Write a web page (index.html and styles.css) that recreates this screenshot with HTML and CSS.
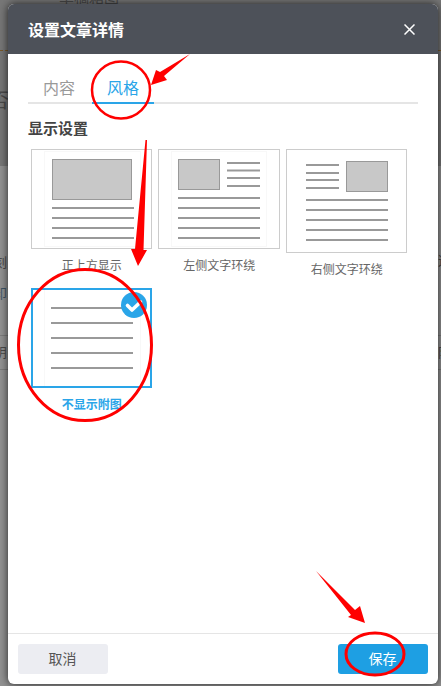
FILE: index.html
```html
<!DOCTYPE html>
<html lang="zh">
<head>
<meta charset="utf-8">
<title>设置文章详情</title>
<link rel="stylesheet" href="styles.css">
</head>
<body>
<div class="backdrop">
  <div class="backdrop-top"></div>
  <span class="ghost ghost-top">草稿箱图</span>
  <span class="ghost ghost-big">否</span>
  <span class="ghost ghost-a">刻</span>
  <span class="ghost ghost-b">印</span>
  <span class="ghost ghost-c">阴</span>
  <span class="ghost ghost-d">这</span>
  <span class="ghost ghost-e">隐</span>
  <i class="ghost-line ghost-line-1"></i>
  <i class="ghost-line ghost-line-2"></i>
  <i class="ghost-dash"></i>
</div>

<main class="modal">
  <header class="modal-head">
    <h1 class="modal-title">设置文章详情</h1>
    <svg class="close" width="11" height="11" viewBox="0 0 11 11" aria-label="关闭"><path d="M.5.5l10 10M10.500.5l-10 10" stroke="#fff" stroke-width="1.5" fill="none"/></svg>
  </header>

  <section class="modal-body">
    <nav class="tabs">
      <span class="tab">内容</span>
      <span class="tab tab-active">风格</span>
    </nav>
    <h2 class="section-title">显示设置</h2>
    <div class="options">
      <div class="option">
        <div class="thumb">
          <svg width="119" height="98" viewBox="0 0 119 98">
            <rect class="faint" x="12.500" y="1.500" width="96" height="95"/>
            <rect class="pic" x="20.500" y="9.500" width="79" height="40"/>
            <path class="ln" d="M20 58h82M20 68h82M20 78h82M20 88h82"/>
          </svg>
        </div>
        <div class="label">正上方显示</div>
      </div>
      <div class="option">
        <div class="thumb">
          <svg width="119" height="98" viewBox="0 0 119 98">
            <rect class="faint" x="12.500" y="1.500" width="95" height="95"/>
            <rect class="pic" x="19.500" y="9.500" width="41" height="30"/>
            <path class="ln" d="M68 13h33M68 20.500h33M68 28h33M68 36h33M19 48h82M19 58h82M19 68h82M19 78h82M19 88h82"/>
          </svg>
        </div>
        <div class="label">左侧文字环绕</div>
      </div>
      <div class="option">
        <div class="thumb thumb-tall">
          <svg width="119" height="102" viewBox="0 0 119 102">
            <rect class="pic" x="59.500" y="11.500" width="41" height="30"/>
            <path class="ln" d="M19 15h33M19 23h33M19 30h33M19 38h33M19 50h82M19 60h82M19 70h82M19 80h82M19 90h82"/>
          </svg>
        </div>
        <div class="label">右侧文字环绕</div>
      </div>
      <div class="option option-active">
        <div class="thumb">
          <svg width="117" height="96" viewBox="0 0 117 96">
            <path class="faint-v" d="M11.500 0v96M107.500 0v96"/>
            <path class="ln" d="M18 18h82M18 33h82M18 48h82M18 63h82M18 78h82"/>
          </svg>
          <svg class="tick" width="26" height="26" viewBox="0 0 26 26"><circle cx="13" cy="13" r="13" fill="#2aa5e8"/><path d="M6.500 13.500l4.500 4.500 8.500-8" fill="none" stroke="#fff" stroke-width="3.600" stroke-linecap="round" stroke-linejoin="round"/></svg>
        </div>
        <div class="label">不显示附图</div>
      </div>
    </div>
  </section>

  <footer class="modal-foot">
    <button class="btn btn-cancel" type="button">取消</button>
    <button class="btn btn-save" type="button">保存</button>
  </footer>
</main>

<svg class="marks" width="441" height="686" viewBox="0 0 441 686" aria-hidden="true">
  <g fill="none" stroke="#f00">
    <ellipse cx="121" cy="90" rx="29" ry="28.500" stroke-width="2.500"/>
    <ellipse cx="85" cy="345" rx="66.500" ry="75.500" stroke-width="3"/>
    <ellipse cx="375" cy="654" rx="29" ry="21" stroke-width="3"/>
  </g>
  <g fill="#f00">
    <path d="M190 54L160 72 156 70 151 85 167 80 164 76Z"/>
    <path d="M145.500 140L147 140 143.500 250 147 250 138 266 131 249 135 249Z"/>
    <path d="M316 571L355 610 360 606 365 623 348 617 351 615Z"/>
  </g>
</svg>
</body>
</html>
```

FILE: styles.css
```css
* { box-sizing: border-box; }

html, body {
  margin: 0;
  height: 686px;
  overflow: hidden;
}

body {
  position: relative;
  font-family: "Noto Sans CJK SC", "Noto Sans", sans-serif;
  padding: 4px 3px 2px 8px;
}

.backdrop {
  position: absolute;
  inset: 0;
  background: #929292;
  overflow: hidden;
}

.backdrop-top {
  height: 166px;
  background: #777;
}

.ghost {
  position: absolute;
  color: #4a4a4a;
  font-size: 13px;
  line-height: 16px;
}

.ghost-top { left: 59px; top: -11px; font-size: 15px; }
.ghost-big { left: -11px; top: 88px; font-size: 20px; line-height: 24px; }
.ghost-a { left: -6px; top: 254px; }
.ghost-b { left: -6px; top: 285px; color: #3f5566; }
.ghost-c { left: -6px; top: 344px; }
.ghost-d { left: 438px; top: 252px; }
.ghost-e { left: 438px; top: 344px; }

.ghost-line {
  position: absolute;
  left: 0;
  right: 0;
  height: 1px;
  background: #7c7c7c;
}
.ghost-line-1 { top: 335px; }
.ghost-line-2 { top: 369px; }

.ghost-dash {
  position: absolute;
  left: 0;
  right: 0;
  top: 50px;
  border-top: 1px dashed #7a5a2a;
}

.modal {
  position: relative;
  display: flex;
  flex-direction: column;
  width: 430px;
  height: 680px;
  background: #fff;
  border-radius: 6px;
  box-shadow: 0 0 9px rgba(0, 0, 0, .75);
  overflow: hidden;
}

.modal-head {
  display: flex;
  align-items: center;
  justify-content: space-between;
  height: 50px;
  flex: none;
  padding: 0 23px 0 20px;
  background: #4d5159;
}

.modal-title {
  margin: 0;
  font-size: 16px;
  font-weight: 700;
  line-height: 24px;
  color: #fff;
}

.close { display: block; }

.modal-body {
  flex: 1;
  padding: 18px 20px 0;
}

.tabs {
  display: flex;
  column-gap: 2px;
  height: 32px;
  border-bottom: 2px solid #e5e5e5;
}

.tab {
  width: 62px;
  height: 32px;
  font-size: 16px;
  line-height: 30px;
  text-align: center;
  color: #999;
}

.tab-active {
  color: #2aa5e8;
  border-bottom: 2px solid #2aa5e8;
}

.section-title {
  margin: 14px 0 11px;
  font-size: 15px;
  font-weight: 700;
  line-height: 20px;
  color: #444;
}

.options {
  display: flex;
  flex-wrap: wrap;
  align-items: flex-start;
  column-gap: 6px;
  row-gap: 11px;
  padding-left: 2.900px;
}

.option { width: 121.500px; }

.thumb {
  position: relative;
  height: 100px;
  border: 1px solid #ccc;
}

.thumb svg { display: block; }
.thumb-tall { height: 104px; }

.option-active .thumb { border: 2px solid #2aa5e8; }

.tick {
  position: absolute;
  top: 2px;
  right: 3px;
}

.faint { fill: none; stroke: #f8f8f8; }
.faint-v { fill: none; stroke: #f8f8f8; }
.pic { fill: #c8c8c8; stroke: #999; }
.ln { fill: none; stroke: #999; stroke-width: 2; }

.label {
  margin-top: 8px;
  font-size: 12px;
  line-height: 16px;
  text-align: center;
  color: #666;
}

.option-active .label {
  color: #2aa5e8;
  font-weight: 700;
}

.modal-foot {
  display: flex;
  justify-content: space-between;
  flex: none;
  height: 51px;
  padding: 10px;
  border-top: 1px solid #e5e5e5;
}

.btn {
  width: 90px;
  height: 30px;
  padding: 0 1px 2px 0;
  border: 0;
  border-radius: 3px;
  font: 14px/28px "Noto Sans CJK SC", "Noto Sans", sans-serif;
}

.btn-cancel { background: #ecedf2; color: #555; }
.btn-save { background: #1e9fe3; color: #fff; }

.marks {
  position: absolute;
  left: 0;
  top: 0;
  pointer-events: none;
}
```
